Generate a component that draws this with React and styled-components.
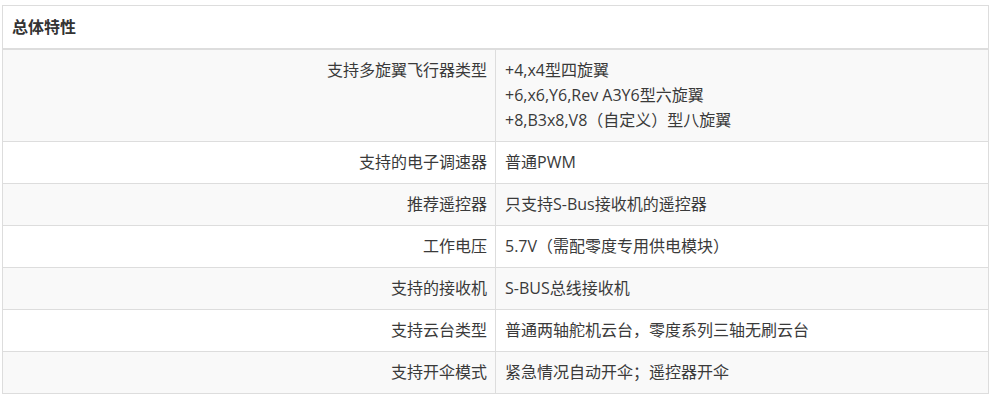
import React from 'react';
import styled, { createGlobalStyle } from 'styled-components';

const GlobalStyle = createGlobalStyle`
  body {
    margin: 0;
    background: #fff;
    font-family: "Open Sans", "Noto Sans CJK SC", sans-serif;
  }
`;

const Page = styled.div`
  padding: 5px 0 0 2px;
`;

const Table = styled.table`
  width: 987px;
  border-collapse: collapse;
  border: 1px solid #ddd;
  font-size: 16px;
  color: #3a3a3a;
`;

const HeadCell = styled.th`
  text-align: left;
  font-weight: bold;
  padding: 8px 9px;
  line-height: 25px;
  height: 26px;
  border-bottom: 2px solid #ddd;
  background: #fff;
  color: #333;
`;

const Row = styled.tr`
  background: ${p => (p.$odd ? '#f9f9f9' : '#fff')};
`;

const Label = styled.td`
  width: 476px;
  text-align: right;
  vertical-align: top;
  padding: 8px;
  line-height: 25px;
  border: 1px solid #ddd;
`;

const Value = styled.td`
  text-align: left;
  vertical-align: top;
  padding: 8px 9px;
  line-height: 25px;
  border: 1px solid #ddd;
`;

const rows = [
  ['支持多旋翼飞行器类型', ['+4,x4型四旋翼', '+6,x6,Y6,Rev A3Y6型六旋翼', '+8,B3x8,V8（自定义）型八旋翼']],
  ['支持的电子调速器', ['普通PWM']],
  ['推荐遥控器', ['只支持S-Bus接收机的遥控器']],
  ['工作电压', ['5.7V（需配零度专用供电模块）']],
  ['支持的接收机', ['S-BUS总线接收机']],
  ['支持云台类型', ['普通两轴舵机云台，零度系列三轴无刷云台']],
  ['支持开伞模式', ['紧急情况自动开伞；遥控器开伞']],
];

export default function App() {
  return (
    <Page>
      <GlobalStyle />
      <Table>
        <thead>
          <tr>
            <HeadCell colSpan={2}>总体特性</HeadCell>
          </tr>
        </thead>
        <tbody>
          {rows.map(([label, lines], i) => (
            <Row key={label} $odd={i % 2 === 0}>
              <Label>{label}</Label>
              <Value>
                {lines.map((l, j) => (
                  <div key={j}>{l}</div>
                ))}
              </Value>
            </Row>
          ))}
        </tbody>
      </Table>
    </Page>
  );
}
